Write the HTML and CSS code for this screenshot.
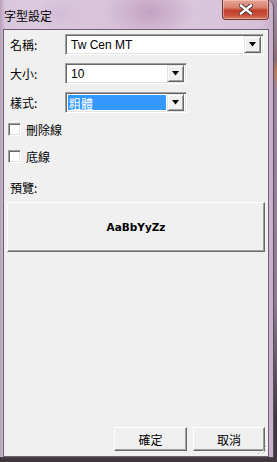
FILE: index.html
```html
<!DOCTYPE html>
<html lang="zh-Hant">
<head>
  <meta charset="UTF-8" />
  <title>字型設定</title>
  <link rel="stylesheet" href="styles.css">
</head>
<body>
  <div class="window">
    <div class="titlebar">
      <span class="title">字型設定</span>
      <div class="close">
        <svg width="14" height="11" viewBox="0 0 14 11">
          <path d="M2 1.5 L12 9.5 M12 1.5 L2 9.5" stroke="#3a2a2a" stroke-width="4.2" stroke-linecap="square"/>
          <path d="M2 1.5 L12 9.5 M12 1.5 L2 9.5" stroke="#ffffff" stroke-width="2.4" stroke-linecap="square"/>
        </svg>
      </div>
    </div>

    <div class="client">
      <div class="field">
        <span class="label">名稱:</span>
        <div class="combo wide">
          <span class="value">Tw Cen MT</span>
          <span class="drop"><svg width="7" height="5" viewBox="0 0 7 5"><path d="M0 0 H7 L3.5 4.5 Z" fill="#000"/></svg></span>
        </div>
      </div>
      <div class="field">
        <span class="label">大小:</span>
        <div class="combo narrow">
          <span class="value">10</span>
          <span class="drop"><svg width="7" height="5" viewBox="0 0 7 5"><path d="M0 0 H7 L3.5 4.5 Z" fill="#000"/></svg></span>
        </div>
      </div>
      <div class="field">
        <span class="label">樣式:</span>
        <div class="combo narrow">
          <span class="value selected">粗體</span>
          <span class="drop"><svg width="7" height="5" viewBox="0 0 7 5"><path d="M0 0 H7 L3.5 4.5 Z" fill="#000"/></svg></span>
        </div>
      </div>

      <label class="check first"><span class="box"></span>刪除線</label>
      <label class="check"><span class="box"></span>底線</label>

      <div class="preview-label">預覽:</div>
      <div class="preview">AaBbYyZz</div>

      <div class="buttons">
        <button class="btn ok">確定</button>
        <button class="btn">取消</button>
      </div>

      <svg class="grip" width="12" height="12" viewBox="0 0 12 12">
        <path d="M11 3 L3 11 M11 7 L7 11" stroke="#a0a0a0" stroke-width="1" stroke-dasharray="1 1"/>
        <path d="M12 4 L4 12 M12 8 L8 12" stroke="#ffffff" stroke-width="1" stroke-dasharray="1 1"/>
      </svg>
    </div>
  </div>
</body>
</html>
```

FILE: styles.css
```css
body {
  margin: 0;
  width: 277px;
  height: 462px;
  overflow: hidden;
  background: linear-gradient(180deg, #a28ea6 0px, #8e6e74 60px, #c07a58 72px, #9a86a0 90px, #8c7a90 300px, #3e383e 420px);
  font-family: "Noto Sans CJK TC", "Liberation Sans", sans-serif;
  font-size: 12px;
  color: #000;
}

.window {
  width: 273px;
  height: 457px;
  border-right: 1px solid #5a4e5e;
  border-bottom: 1px solid #4a424c;
  border-top-right-radius: 7px;
  background:
    radial-gradient(ellipse 45px 26px at 150px 12px, #c4a1c3, transparent),
    radial-gradient(ellipse 30px 20px at 60px 14px, #d3bdd6, transparent),
    linear-gradient(90deg, #b89fb9 0px, #d8c6dc 5px, #dccbe0 40px, #d8c2d9 110px, #dac6db 200px, #d6c0d6 260px, #c8b0c9 273px);
  display: flex;
  flex-direction: column;
}

.titlebar {
  height: 29px;
  display: flex;
  position: relative;
}

.title {
  margin: 9px 0 0 4px;
  line-height: 14px;
  font-size: 12px;
  color: #000;
}

.close {
  position: absolute;
  left: 222px;
  top: 0;
  width: 45px;
  height: 19px;
  border: 1px solid #6e3a36;
  border-top: 0;
  border-radius: 0 0 4px 4px;
  background: linear-gradient(180deg, #e6a597 0%, #d8806c 40%, #c2402c 55%, #c9503a 80%, #dc7a60 100%);
  box-shadow: inset 0 0 0 1px rgba(255, 210, 200, 0.5);
  display: flex;
  align-items: center;
  justify-content: center;
}

.client {
  margin-left: 3px;
  width: 264px;
  height: 422px;
  border: 1px solid #6d6170;
  background: #f0f0f0;
  display: flex;
  flex-direction: column;
  position: relative;
  padding-top: 4px;
  box-sizing: content-box;
}

.field {
  display: flex;
  align-items: center;
  height: 21px;
  margin-bottom: 8px;
}

.label {
  width: 55px;
  padding-left: 6px;
  line-height: 14px;
}

.combo {
  height: 21px;
  box-sizing: border-box;
  border: 1px solid;
  border-color: #a0a0a0 #ffffff #ffffff #a0a0a0;
  box-shadow: inset 1px 1px 0 #696969, inset -1px -1px 0 #e3e3e3;
  background: #fff;
  display: flex;
  align-items: stretch;
  padding: 2px 2px 2px 2px;
}

.combo.wide {
  width: 199px;
}

.combo.narrow {
  width: 122px;
}

.value {
  flex: 1;
  font-family: "Liberation Sans", "Noto Sans CJK TC", sans-serif;
  font-size: 12px;
  line-height: 17px;
  padding-left: 3px;
}

.value.selected {
  background: #3399ff;
  color: #fff;
  font-family: "Noto Sans CJK TC", sans-serif;
  margin-right: 1px;
  padding-left: 1px;
}

.drop {
  width: 17px;
  box-sizing: border-box;
  margin-top: -1px;
  margin-bottom: -1px;
  background: #f0f0f0;
  border: 1px solid;
  border-color: #e3e3e3 #696969 #696969 #e3e3e3;
  box-shadow: inset 1px 1px 0 #ffffff, inset -1px -1px 0 #a0a0a0;
  display: flex;
  align-items: center;
  justify-content: center;
}

.check {
  display: flex;
  align-items: center;
  height: 13px;
  padding-left: 4px;
  margin-top: 14px;
  line-height: 13px;
}

.check.first {
  margin-top: 2px;
}

.box {
  width: 13px;
  height: 13px;
  box-sizing: border-box;
  border: 1px solid;
  border-color: #a0a0a0 #ffffff #ffffff #a0a0a0;
  box-shadow: inset 1px 1px 0 #696969, inset -1px -1px 0 #e3e3e3;
  background: #fff;
  margin-right: 5px;
}

.preview-label {
  margin-top: 18px;
  padding-left: 6px;
  line-height: 14px;
}

.preview {
  margin: 7px 0 0 3px;
  width: 258px;
  height: 50px;
  box-sizing: border-box;
  border: 1px solid;
  border-color: #ffffff #696969 #696969 #ffffff;
  box-shadow: inset -1px -1px 0 #a0a0a0;
  display: flex;
  align-items: center;
  justify-content: center;
  font-family: "DejaVu Sans", sans-serif;
  font-weight: bold;
  font-size: 10.5px;
}

.buttons {
  margin-top: auto;
  margin-bottom: 5px;
  display: flex;
  justify-content: flex-end;
  gap: 6px;
  padding-right: 3px;
}

.btn {
  width: 72px;
  height: 24px;
  box-sizing: border-box;
  border: 1px solid;
  border-color: #ffffff #696969 #696969 #ffffff;
  box-shadow: inset -1px -1px 0 #a0a0a0;
  background: #f0f0f0;
  font-family: "Noto Sans CJK TC", sans-serif;
  font-size: 12px;
  color: #000;
  padding: 0;
}

.btn.ok {
  width: 73px;
}

.grip {
  position: absolute;
  right: 1px;
  bottom: 1px;
}
```
